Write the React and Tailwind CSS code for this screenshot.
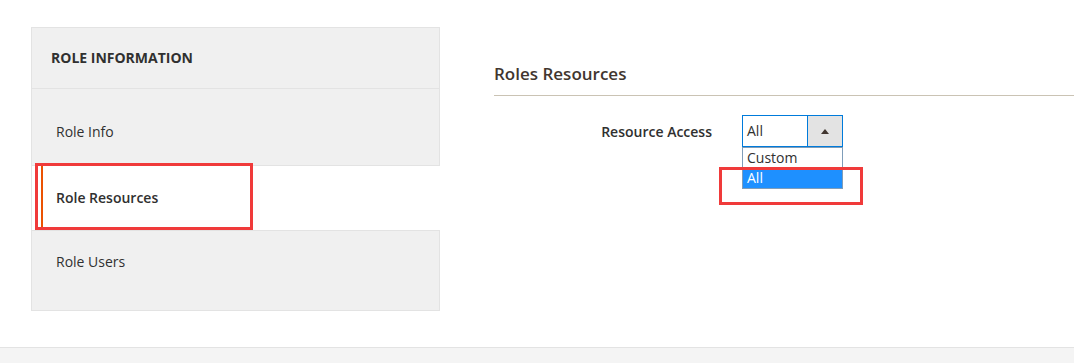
import { useState } from "react";

const NavItems = [
    { label: "Role Info" },
    { label: "Role Resources", active: true },
    { label: "Role Users" },
]

const App = () => {

    const [access, setAccess] = useState("All");

    return (
        <div className="relative w-[1074px] h-[363px] overflow-hidden bg-white font-['Open_Sans',sans-serif] text-[#303030]">
            <div className="flex h-[347px] pt-[27px] pl-[31px]">
                <aside className="w-[409px] shrink-0 flex flex-col text-[14px] leading-[20px]">
                    <div className="h-[62px] flex items-center pl-[19px] bg-[#f0f0f0] border border-[#e3e3e3] font-bold uppercase text-[#303030]">
                        Role Information
                    </div>
                    <div className="h-[77px] pt-[33px] pl-[24px] bg-[#f0f0f0] border-x border-b border-[#e3e3e3]">
                        {NavItems[0].label}
                    </div>
                    <div className="h-[64px] flex pl-[9px] bg-white border-l border-[#e3e3e3] font-semibold">
                        <div className="h-full flex items-center pl-[13px] border-l-2 border-[#eb5202]">
                            {NavItems[1].label}
                        </div>
                    </div>
                    <div className="h-[81px] pt-[21px] pl-[24px] bg-[#f0f0f0] border border-[#e3e3e3]">
                        {NavItems[2].label}
                    </div>
                </aside>

                <main className="flex-1 ml-[54px] pt-[35px]">
                    <h2 className="text-[17px] leading-[23px] font-semibold text-[#41362f] pb-[10px] border-b border-[#cac3b4]">
                        Roles Resources
                    </h2>
                    <div className="flex items-start mt-[19px] text-[14px]">
                        <label className="w-[218px] text-right font-semibold leading-[34px]">Resource Access</label>
                        <div className="ml-[30px] w-[101px]">
                            <div className="h-[32px] flex border border-[#007bdb] bg-white">
                                <span className="flex-1 pl-[4px] leading-[30px] text-[#303030]">{access}</span>
                                <span className="w-[35px] flex items-center justify-center bg-[#e3e3e3] border-l border-[#007bdb]">
                                    <svg width="8" height="5" viewBox="0 0 8 5">
                                        <path d="M0 5 L4 0 L8 5 Z" fill="#41362f" />
                                    </svg>
                                </span>
                            </div>
                            <ul className="border border-[#7f9db9] bg-white leading-[20px]">
                                <li className="h-[20px] pl-[4px] text-[#303030] cursor-pointer" onClick={() => setAccess("Custom")}>Custom</li>
                                <li className="h-[20px] pl-[4px] bg-[#1e90ff] text-white cursor-pointer" onClick={() => setAccess("All")}>All</li>
                            </ul>
                        </div>
                    </div>
                </main>
            </div>
            <div className="h-[16px] bg-[#f4f4f4] border-t border-[#e3e3e3]"></div>

            {/* annotation boxes */}
            <div className="absolute left-[35px] top-[163px] w-[218px] h-[67px] border-[3px] border-[#f03a3a] pointer-events-none"></div>
            <div className="absolute left-[719px] top-[167px] w-[144px] h-[38px] border-[3px] border-[#f03a3a] pointer-events-none"></div>
        </div>
    )
}

export default App;
